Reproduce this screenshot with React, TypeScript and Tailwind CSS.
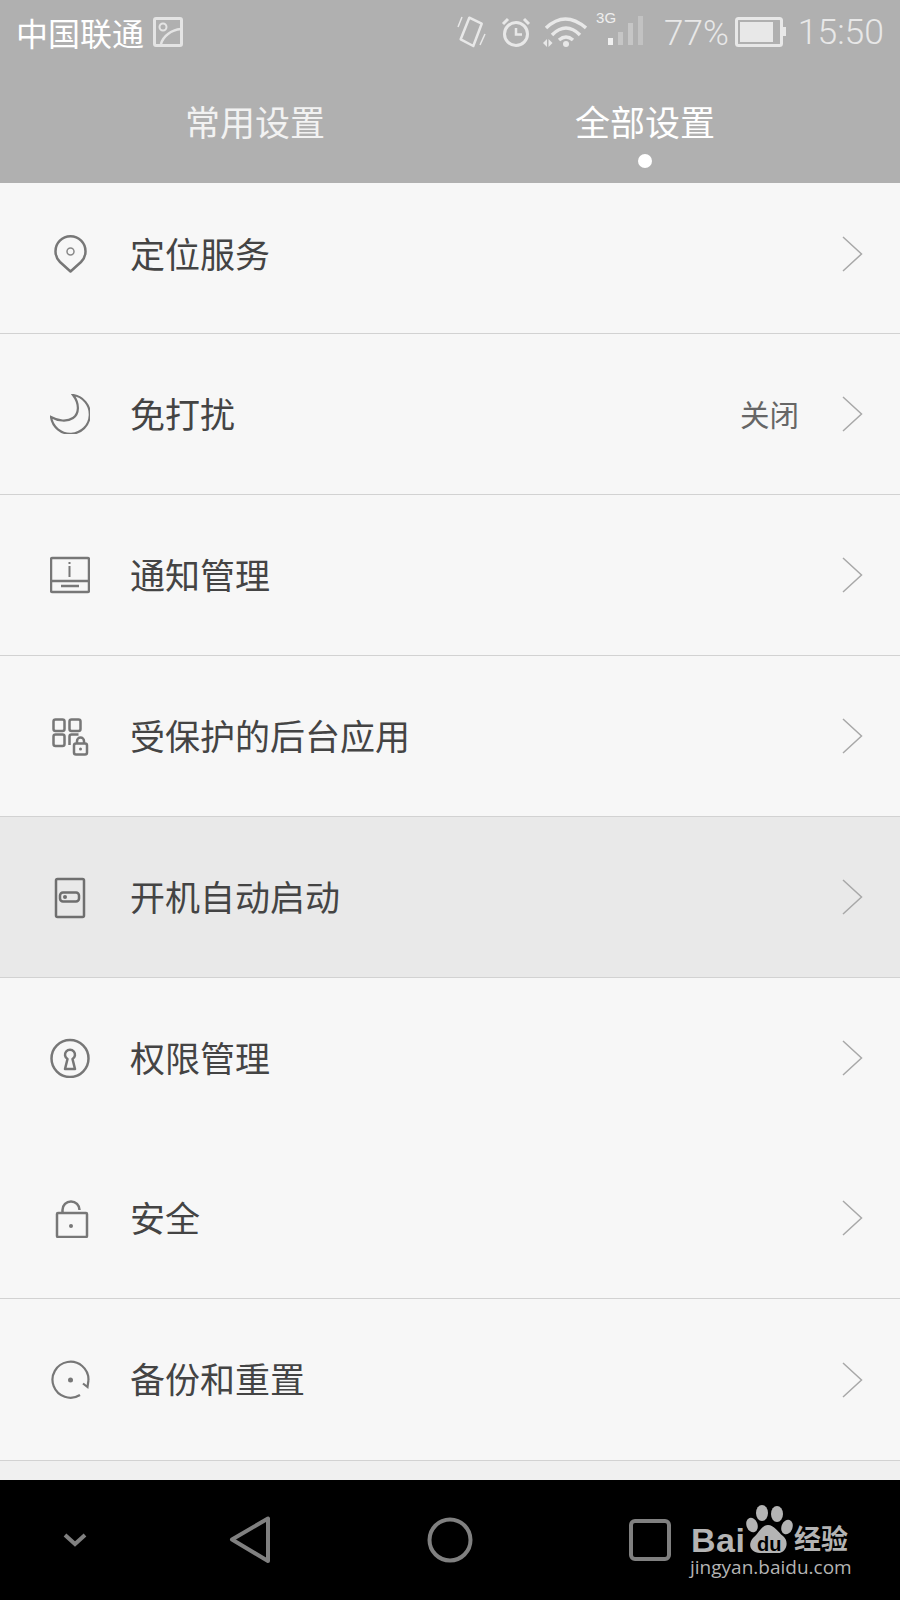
import React from 'react';

const cjk = "font-['Noto_Sans_CJK_SC','Noto_Sans',sans-serif]";

function PinIcon() {
  return (
    <svg width="40" height="40" viewBox="0 0 40 40" fill="none" stroke="#777" strokeWidth="2.5">
      <path d="M20.5 37.5 L10 28 A15 15 0 1 1 31 28 Z" strokeLinejoin="round" />
      <circle cx="20.5" cy="17.5" r="3.5" stroke="#888" strokeWidth="1.5" />
    </svg>
  );
}

function MoonIcon() {
  return (
    <svg width="40" height="40" viewBox="0 0 40 40" fill="none" stroke="#777" strokeWidth="2.2">
      <path d="M23 1 A19.5 19.5 0 1 1 1 23 C8 27 17 28 23 24 C29 20 30 10 23 1 Z" strokeLinejoin="miter" />
    </svg>
  );
}

function NoticeIcon() {
  return (
    <svg width="40" height="40" viewBox="0 0 40 40" fill="none" stroke="#777" strokeWidth="2.5">
      <rect x="1" y="3" width="38" height="34" rx="1.5" />
      <path d="M1 26 H39" />
      <path d="M19.5 7 V9 M19.5 11 V22" strokeWidth="2" />
      <path d="M11 31 H29" strokeWidth="2.5" />
    </svg>
  );
}

function AppsLockIcon() {
  return (
    <svg width="40" height="40" viewBox="0 0 40 40" fill="none" stroke="#777" strokeWidth="2.5">
      <rect x="3.5" y="3.5" width="11" height="11.5" rx="2" />
      <rect x="19.5" y="3.5" width="11" height="11.5" rx="2" />
      <rect x="3.5" y="18.5" width="11" height="11.5" rx="2" />
      <path d="M19.5 29 V20.5 A2 2 0 0 1 21.5 18.5 H28.5" />
      <rect x="24" y="27.5" width="13" height="11" rx="2" />
      <path d="M27 27.5 V25 A3.5 3.5 0 0 1 34 25 V27.5" />
      <circle cx="30.5" cy="33" r="1.5" fill="#777" stroke="none" />
    </svg>
  );
}

function DoorIcon() {
  return (
    <svg width="40" height="40" viewBox="0 0 40 40" fill="none" stroke="#6f6f6f" strokeWidth="2.5" className="overflow-visible">
      <rect x="6" y="2" width="28" height="38" rx="1.5" />
      <rect x="10" y="15.5" width="19" height="9" rx="3" />
      <circle cx="15" cy="20" r="2" fill="#6f6f6f" stroke="none" />
    </svg>
  );
}

function KeyholeIcon() {
  return (
    <svg width="40" height="40" viewBox="0 0 40 40" fill="none" stroke="#777" strokeWidth="2.5">
      <circle cx="20" cy="20.5" r="18.5" />
      <path d="M17.5 21 A5 5 0 1 1 22.5 21 L25 31 H15 Z" strokeLinejoin="round" />
    </svg>
  );
}

function LockIcon() {
  return (
    <svg width="40" height="40" viewBox="0 0 40 40" fill="none" stroke="#777" strokeWidth="2.5">
      <rect x="7" y="15" width="30" height="24" rx="1" />
      <path d="M12.5 15 V12 A8.5 8.5 0 0 1 29.5 12" />
      <circle cx="21" cy="28" r="2" fill="#777" stroke="none" />
    </svg>
  );
}

function BackupIcon() {
  return (
    <svg width="40" height="40" viewBox="0 0 40 40" fill="none" stroke="#777" strokeWidth="2.2">
      <path d="M30 35 A18 18 0 1 1 38.5 20" />
      <path d="M33 23.5 L37.5 27 L38.5 20" />
      <circle cx="20.5" cy="20" r="2.5" fill="#777" stroke="none" />
    </svg>
  );
}

function Chevron() {
  return (
    <svg width="21" height="36" viewBox="0 0 21 36" fill="none" stroke="#a8a8a8" strokeWidth="1.5">
      <path d="M1 1 L19.5 18 L1 35" />
    </svg>
  );
}

const rows = [
  { label: '定位服务', icon: <PinIcon />, height: 'h-[151px] pb-[8px]' },
  { label: '免打扰', icon: <MoonIcon />, value: '关闭' },
  { label: '通知管理', icon: <NoticeIcon /> },
  { label: '受保护的后台应用', icon: <AppsLockIcon /> },
  { label: '开机自动启动', icon: <DoorIcon />, active: true },
  { label: '权限管理', icon: <KeyholeIcon />, height: 'h-[160px]', noBorder: true },
  { label: '安全', icon: <LockIcon /> },
  { label: '备份和重置', icon: <BackupIcon />, height: 'h-[162px]' },
];

function StatusBar() {
  return (
    <div className="flex h-[63px] items-center justify-between pl-[16px] pr-[16px] text-[#e8e8e8]">
      <div className="flex items-center">
        <span className={`${cjk} text-[32px] leading-none text-white`}>中国联通</span>
        <svg width="30" height="30" viewBox="0 0 30 30" fill="none" stroke="#e4e4e4" strokeWidth="3" className="ml-[9px]">
          <rect x="1.5" y="1.5" width="27" height="27" rx="1.5" />
          <circle cx="10" cy="10" r="3.5" strokeWidth="2" />
          <path d="M8 27 C10 19 18 13 28 12" strokeWidth="2.5" />
        </svg>
      </div>
      <div className="flex items-center">
        <svg width="30" height="32" viewBox="0 0 30 32" fill="none" stroke="#e8e8e8" strokeWidth="2.5" strokeLinejoin="round">
          <path d="M12.3 1.7 L24.7 7.7 L16.3 30 L3.7 23.3 Z" />
          <path d="M1 11 L5 1" strokeWidth="1.5" />
          <path d="M23 29 L28 18" strokeWidth="1.5" />
        </svg>
        <svg width="30" height="32" viewBox="0 0 30 32" fill="none" stroke="#e8e8e8" strokeWidth="3" className="ml-[14px]">
          <circle cx="15" cy="18" r="11.5" />
          <path d="M15 12 V18.5 H21" strokeWidth="2.5" />
          <path d="M2 8 L7 3 M28 8 L23 3" />
        </svg>
        <svg width="44" height="32" viewBox="0 0 44 32" fill="none" stroke="#e8e8e8" strokeWidth="3.5" className="ml-[12px]">
          <path d="M3 12 Q22 -6 43 12" />
          <path d="M9 19 Q23 5 37 19" />
          <path d="M16 24 Q23 18 30 24" />
          <circle cx="23" cy="28" r="3" fill="#e8e8e8" stroke="none" />
          <path d="M4 23 L0 27 L4 31 Z M5.5 23 L9.5 27 L5.5 31 Z" fill="#e8e8e8" stroke="none" />
        </svg>
        <div className="relative ml-[9px] h-[32px] w-[47px]">
          <span className="absolute left-0 top-[-6px] font-['Liberation_Sans',sans-serif] text-[15px] leading-none text-[#eeeeee]">3G</span>
          <svg width="47" height="32" viewBox="0 0 47 32" className="absolute left-0 top-0">
            <rect x="12" y="22" width="5" height="7" fill="#f0f0f0" />
            <rect x="22" y="16" width="5" height="13" fill="#c6c6c6" />
            <rect x="32" y="7" width="5" height="22" fill="#c6c6c6" />
            <rect x="42" y="0" width="5" height="29" fill="#c2c2c2" />
          </svg>
        </div>
        <span className="ml-[21px] mt-[3px] font-['Roboto',sans-serif] text-[35px] font-light leading-none">77%</span>
        <svg width="51" height="30" viewBox="0 0 51 30" fill="none" className="ml-[6px]">
          <rect x="1.5" y="1.5" width="45" height="27" rx="2" stroke="#e8e8e8" strokeWidth="3" />
          <rect x="5" y="5" width="33" height="20" fill="#e8e8e8" />
          <rect x="48" y="10" width="3" height="9" fill="#e8e8e8" />
        </svg>
        <span className="ml-[12px] mt-[2px] font-['Roboto',sans-serif] text-[35.5px] font-light leading-none">15:50</span>
      </div>
    </div>
  );
}

function Tabs() {
  return (
    <div className="flex h-[120px] justify-center">
      <div className="flex w-[390px] justify-center pt-[40px]">
        <span className={`${cjk} text-[35px] leading-none text-[#f2f2f2]`}>常用设置</span>
      </div>
      <div className="relative flex w-[390px] justify-center pt-[40px]">
        <span className={`${cjk} text-[35px] leading-none text-white`}>全部设置</span>
        <div className="absolute left-[188px] top-[91px] h-[14px] w-[14px] rounded-full bg-white" />
      </div>
    </div>
  );
}

function BaiduMark() {
  return (
    <div className="absolute left-[690px] top-[20px] h-[100px] w-[170px] text-[#b4b4b4]">
      <span className="absolute left-[1px] top-[23px] font-['Liberation_Sans',sans-serif] text-[34px] font-bold leading-none tracking-[0.5px]">Bai</span>
      <svg width="50" height="52" viewBox="0 0 50 52" className="absolute left-[55px] top-[3px]">
        <ellipse cx="17" cy="10" rx="6" ry="8" fill="#b4b4b4" />
        <ellipse cx="32" cy="11" rx="6" ry="8" fill="#b4b4b4" />
        <ellipse cx="7" cy="22" rx="5.5" ry="7.5" fill="#b4b4b4" transform="rotate(-20 7 22)" />
        <ellipse cx="42" cy="24" rx="5.5" ry="7.5" fill="#b4b4b4" transform="rotate(20 42 24)" />
        <path d="M23 22 C29 22 33 29 38 33 C45 39 41 50 33 50 C28 50 20 50 15 50 C6 50 2 42 8 35 C14 30 17 22 23 22 Z" fill="#b4b4b4" />
      </svg>
      <span className="absolute left-[67px] top-[34px] font-['Liberation_Sans',sans-serif] text-[20px] font-bold leading-none text-black">du</span>
      <span className={`${cjk} absolute left-[104px] top-[24px] text-[27px] font-bold leading-none`}>经验</span>
      <span className="absolute left-0 top-[58px] font-['Open_Sans',sans-serif] text-[19px] leading-none">jingyan.baidu.com</span>
    </div>
  );
}

export default function App() {
  return (
    <div className="flex h-[1600px] w-[900px] flex-col overflow-hidden bg-[#f7f7f7]">
      <div className="bg-[#b0b0b0]">
        <StatusBar />
        <Tabs />
      </div>

      <div className="flex-1">
        {rows.map((row) => (
          <div
            key={row.label}
            className={`flex items-center pl-[50px] pr-[37px] ${row.height ?? 'h-[161px]'} ${row.noBorder ? '' : 'border-b border-[#d2d2d2]'} ${row.active ? 'bg-[#e9e9e9]' : ''}`}
          >
            <div className="h-[40px] w-[40px]">{row.icon}</div>
            <span className={`${cjk} mb-[4px] ml-[40px] flex-1 text-[35px] leading-none text-[#444444]`}>{row.label}</span>
            {row.value && <span className={`${cjk} mr-[43px] text-[29.5px] leading-none text-[#666666]`}>{row.value}</span>}
            <Chevron />
          </div>
        ))}
        <div className="h-[19px] bg-[#f0f0f0]" />
      </div>

      <div className="relative flex h-[120px] items-center bg-black">
        <svg width="24" height="15" viewBox="0 0 24 15" fill="none" stroke="#808080" strokeWidth="4" className="ml-[63px]">
          <path d="M2 2 L12 11 L22 2" />
        </svg>
        <svg width="42" height="48" viewBox="0 0 42 48" fill="none" stroke="#808080" strokeWidth="4" strokeLinejoin="round" className="ml-[142px]">
          <path d="M3 23.5 L39 2.5 V45 Z" />
        </svg>
        <svg width="48" height="48" viewBox="0 0 48 48" fill="none" stroke="#808080" strokeWidth="4" className="ml-[155px]">
          <circle cx="24" cy="24" r="20.5" />
        </svg>
        <svg width="42" height="42" viewBox="0 0 42 42" fill="none" stroke="#808080" strokeWidth="4" className="ml-[155px]">
          <rect x="2" y="2" width="38" height="38" rx="4" />
        </svg>
        <BaiduMark />
      </div>
    </div>
  );
}
